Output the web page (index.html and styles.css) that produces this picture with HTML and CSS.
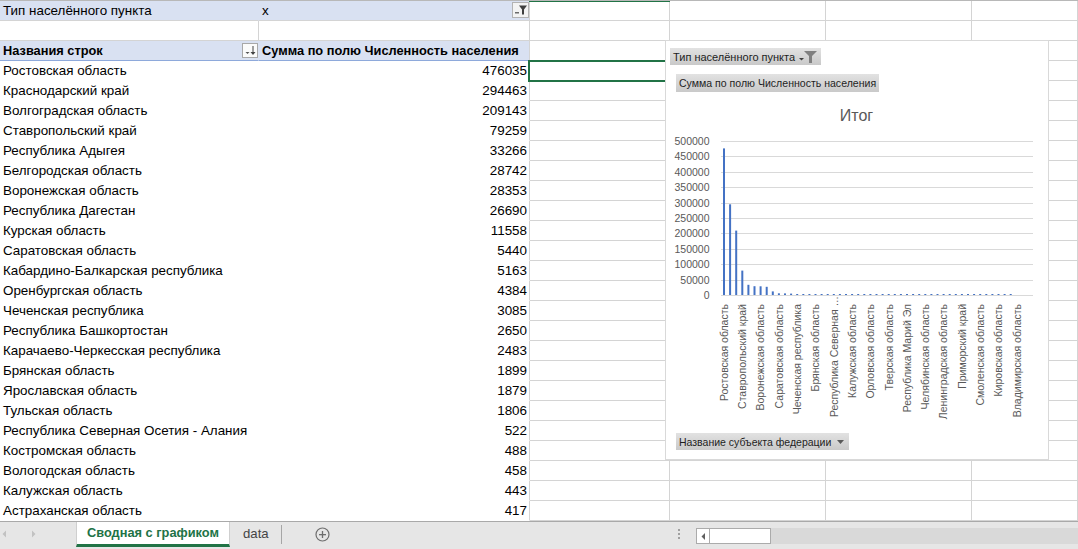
FILE: index.html
```html
<!DOCTYPE html>
<html lang="ru">
<head>
<meta charset="utf-8">
<link rel="stylesheet" href="styles.css">
</head>
<body>
<div class="sheet">
  <div class="row r-filter">
    <div class="c pa blue">Тип населённого пункта</div>
    <div class="c pb blue fx"><span>x</span>
      <svg class="fbtn" width="17" height="16" viewBox="0 0 17 16"><rect x="0.5" y="0.5" width="16" height="15" fill="#f3f3f3" stroke="#b3b3b3"/><polygon points="7,3.5 15,3.5 12,7.5 12,12.5 10,12.5 10,7.5" fill="#3f3f3f"/><rect x="3" y="10" width="4" height="1.5" fill="#6b6b6b"/></svg>
    </div>
    <div class="c"></div><div class="c"></div><div class="c"></div><div class="c"></div>
  </div>
  <div class="row">
    <div class="c"></div><div class="c"></div><div class="c"></div><div class="c"></div><div class="c"></div><div class="c"></div>
  </div>
  <div class="row r-head">
    <div class="c pa blue hb fx"><span>Названия строк</span>
      <svg class="sbtn" width="16" height="15" viewBox="0 0 16 15"><rect x="0.5" y="0.5" width="15" height="14" fill="#fbfbfb" stroke="#a8a8a8"/><polygon points="3.5,9 7.5,9 5.5,11" fill="#555"/><rect x="10.5" y="3" width="1" height="8" fill="#444"/><polygon points="8.5,9 13.5,9 11,12" fill="#444"/></svg>
    </div>
    <div class="c pb blue hb bold">Сумма по полю Численность населения</div>
    <div class="c"></div><div class="c"></div><div class="c"></div><div class="c"></div>
  </div>
  <div class="row"><div class="c pa">Ростовская область</div><div class="c pb num">476035</div><div class="c"></div><div class="c"></div><div class="c"></div><div class="c"></div></div>
  <div class="row"><div class="c pa">Краснодарский край</div><div class="c pb num">294463</div><div class="c"></div><div class="c"></div><div class="c"></div><div class="c"></div></div>
  <div class="row"><div class="c pa">Волгоградская область</div><div class="c pb num">209143</div><div class="c"></div><div class="c"></div><div class="c"></div><div class="c"></div></div>
  <div class="row"><div class="c pa">Ставропольский край</div><div class="c pb num">79259</div><div class="c"></div><div class="c"></div><div class="c"></div><div class="c"></div></div>
  <div class="row"><div class="c pa">Республика Адыгея</div><div class="c pb num">33266</div><div class="c"></div><div class="c"></div><div class="c"></div><div class="c"></div></div>
  <div class="row"><div class="c pa">Белгородская область</div><div class="c pb num">28742</div><div class="c"></div><div class="c"></div><div class="c"></div><div class="c"></div></div>
  <div class="row"><div class="c pa">Воронежская область</div><div class="c pb num">28353</div><div class="c"></div><div class="c"></div><div class="c"></div><div class="c"></div></div>
  <div class="row"><div class="c pa">Республика Дагестан</div><div class="c pb num">26690</div><div class="c"></div><div class="c"></div><div class="c"></div><div class="c"></div></div>
  <div class="row"><div class="c pa">Курская область</div><div class="c pb num">11558</div><div class="c"></div><div class="c"></div><div class="c"></div><div class="c"></div></div>
  <div class="row"><div class="c pa">Саратовская область</div><div class="c pb num">5440</div><div class="c"></div><div class="c"></div><div class="c"></div><div class="c"></div></div>
  <div class="row"><div class="c pa">Кабардино-Балкарская республика</div><div class="c pb num">5163</div><div class="c"></div><div class="c"></div><div class="c"></div><div class="c"></div></div>
  <div class="row"><div class="c pa">Оренбургская область</div><div class="c pb num">4384</div><div class="c"></div><div class="c"></div><div class="c"></div><div class="c"></div></div>
  <div class="row"><div class="c pa">Чеченская республика</div><div class="c pb num">3085</div><div class="c"></div><div class="c"></div><div class="c"></div><div class="c"></div></div>
  <div class="row"><div class="c pa">Республика Башкортостан</div><div class="c pb num">2650</div><div class="c"></div><div class="c"></div><div class="c"></div><div class="c"></div></div>
  <div class="row"><div class="c pa">Карачаево-Черкесская республика</div><div class="c pb num">2483</div><div class="c"></div><div class="c"></div><div class="c"></div><div class="c"></div></div>
  <div class="row"><div class="c pa">Брянская область</div><div class="c pb num">1899</div><div class="c"></div><div class="c"></div><div class="c"></div><div class="c"></div></div>
  <div class="row"><div class="c pa">Ярославская область</div><div class="c pb num">1879</div><div class="c"></div><div class="c"></div><div class="c"></div><div class="c"></div></div>
  <div class="row"><div class="c pa">Тульская область</div><div class="c pb num">1806</div><div class="c"></div><div class="c"></div><div class="c"></div><div class="c"></div></div>
  <div class="row"><div class="c pa">Республика Северная Осетия - Алания</div><div class="c pb num">522</div><div class="c"></div><div class="c"></div><div class="c"></div><div class="c"></div></div>
  <div class="row"><div class="c pa">Костромская область</div><div class="c pb num">488</div><div class="c"></div><div class="c"></div><div class="c"></div><div class="c"></div></div>
  <div class="row"><div class="c pa">Вологодская область</div><div class="c pb num">458</div><div class="c"></div><div class="c"></div><div class="c"></div><div class="c"></div></div>
  <div class="row"><div class="c pa">Калужская область</div><div class="c pb num">443</div><div class="c"></div><div class="c"></div><div class="c"></div><div class="c"></div></div>
  <div class="row"><div class="c pa">Астраханская область</div><div class="c pb num">417</div><div class="c"></div><div class="c"></div><div class="c"></div><div class="c"></div></div>

  <div class="colsel"></div>
  <div class="cellsel"></div>

  <div class="chart">
    <svg class="plot" width="384" height="420" viewBox="0 0 384 420">
      <text x="191.5" y="81" class="title" text-anchor="middle">Итог</text>
      <g stroke="#d9d9d9" stroke-width="1">
        <line x1="56" x2="368" y1="255.5" y2="255.5"/>
        <line x1="56" x2="368" y1="240.5" y2="240.5"/>
        <line x1="56" x2="368" y1="224.5" y2="224.5"/>
        <line x1="56" x2="368" y1="209.5" y2="209.5"/>
        <line x1="56" x2="368" y1="193.5" y2="193.5"/>
        <line x1="56" x2="368" y1="178.5" y2="178.5"/>
        <line x1="56" x2="368" y1="163.5" y2="163.5"/>
        <line x1="56" x2="368" y1="147.5" y2="147.5"/>
        <line x1="56" x2="368" y1="132.5" y2="132.5"/>
        <line x1="56" x2="368" y1="116.5" y2="116.5"/>
        <line x1="56" x2="368" y1="101.5" y2="101.5"/>
      </g>
      <g class="ylab" text-anchor="end">
        <text x="44.5" y="259.2">0</text>
        <text x="44.5" y="244.2">50000</text>
        <text x="44.5" y="228.4">100000</text>
        <text x="44.5" y="213.2">150000</text>
        <text x="44.5" y="197.4">200000</text>
        <text x="44.5" y="182.2">250000</text>
        <text x="44.5" y="167.2">300000</text>
        <text x="44.5" y="151.4">350000</text>
        <text x="44.5" y="136.2">400000</text>
        <text x="44.5" y="120.4">450000</text>
        <text x="44.5" y="105.2">500000</text>
      </g>
      <g fill="#4472c4">
        <rect x="58" y="108.4" width="2" height="146.6"/>
        <rect x="64.1" y="164.3" width="2" height="90.7"/>
        <rect x="70.2" y="190.6" width="2" height="64.4"/>
        <rect x="76.3" y="230.6" width="2" height="24.4"/>
        <rect x="82.4" y="244.8" width="2" height="10.2"/>
        <rect x="88.5" y="246.2" width="2" height="8.8"/>
        <rect x="94.6" y="246.3" width="2" height="8.7"/>
        <rect x="100.7" y="246.8" width="2" height="8.2"/>
        <rect x="106.8" y="251.4" width="2" height="3.6"/>
        <rect x="112.9" y="253.3" width="2" height="1.7"/>
        <rect x="119" y="253.4" width="2" height="1.6"/>
        <rect x="125.1" y="253.6" width="2" height="1.4"/>
        <rect x="131.2" y="254" width="2" height="1"/>
        <rect x="137.3" y="254" width="2" height="1"/>
        <rect x="143.4" y="254" width="2" height="1"/>
        <rect x="149.5" y="254" width="2" height="1"/>
        <rect x="155.6" y="254" width="2" height="1"/>
        <rect x="161.7" y="254" width="2" height="1"/>
        <rect x="167.8" y="254" width="2" height="1"/>
        <rect x="173.9" y="254" width="2" height="1"/>
        <rect x="180" y="254" width="2" height="1"/>
        <rect x="186.1" y="254" width="2" height="1"/>
        <rect x="192.2" y="254" width="2" height="1"/>
        <rect x="198.3" y="254" width="2" height="1"/>
        <rect x="204.4" y="254" width="2" height="1"/>
        <rect x="210.5" y="254" width="2" height="1"/>
        <rect x="216.6" y="254" width="2" height="1"/>
        <rect x="222.7" y="254" width="2" height="1"/>
        <rect x="228.8" y="254" width="2" height="1"/>
        <rect x="234.9" y="254" width="2" height="1"/>
        <rect x="241" y="254" width="2" height="1"/>
        <rect x="247.1" y="254" width="2" height="1"/>
        <rect x="253.2" y="254" width="2" height="1"/>
        <rect x="259.3" y="254" width="2" height="1"/>
        <rect x="265.4" y="254" width="2" height="1"/>
        <rect x="271.5" y="254" width="2" height="1"/>
        <rect x="277.6" y="254" width="2" height="1"/>
        <rect x="283.7" y="254" width="2" height="1"/>
        <rect x="289.8" y="254" width="2" height="1"/>
        <rect x="295.9" y="254" width="2" height="1"/>
        <rect x="302" y="254" width="2" height="1"/>
        <rect x="308.1" y="254" width="2" height="1"/>
        <rect x="314.2" y="254" width="2" height="1"/>
        <rect x="320.3" y="254" width="2" height="1"/>
        <rect x="326.4" y="254" width="2" height="1"/>
        <rect x="332.5" y="254" width="2" height="1"/>
        <rect x="338.6" y="254" width="2" height="1"/>
        <rect x="344.7" y="254" width="2" height="1"/>
      </g>
      <g class="xlab" text-anchor="end">
        <text transform="translate(62.8 264) rotate(-90)">Ростовская область</text>
        <text transform="translate(81.1 264) rotate(-90)">Ставропольский край</text>
        <text transform="translate(99.4 264) rotate(-90)">Воронежская область</text>
        <text transform="translate(117.7 264) rotate(-90)">Саратовская область</text>
        <text transform="translate(136 264) rotate(-90)">Чеченская республика</text>
        <text transform="translate(154.3 264) rotate(-90)">Брянская область</text>
        <text transform="translate(172.6 256) rotate(-90)">Республика Северная …</text>
        <text transform="translate(190.9 264) rotate(-90)">Калужская область</text>
        <text transform="translate(209.2 264) rotate(-90)">Орловская область</text>
        <text transform="translate(227.5 264) rotate(-90)">Тверская область</text>
        <text transform="translate(245.8 264) rotate(-90)">Республика Марий Эл</text>
        <text transform="translate(264.1 264) rotate(-90)">Челябинская область</text>
        <text transform="translate(282.4 264) rotate(-90)">Ленинградская область</text>
        <text transform="translate(300.7 264) rotate(-90)">Приморский край</text>
        <text transform="translate(319 264) rotate(-90)">Смоленская область</text>
        <text transform="translate(337.3 264) rotate(-90)">Кировская область</text>
        <text transform="translate(355.6 264) rotate(-90)">Владимирская область</text>
      </g>
    </svg>
    <div class="pbtn btn-type"><span>Тип населённого пункта</span>
      <svg width="20" height="14" viewBox="0 0 20 14"><polygon points="1,8 6,8 3.5,10.5" fill="#404040"/><polygon points="6,1 19,1 14,6 14,13 11,13 11,6" fill="#808080"/></svg>
    </div>
    <div class="pbtn btn-sum">Сумма по полю Численность населения</div>
    <div class="pbtn btn-name"><span>Название субъекта федерации</span>
      <svg width="12" height="10" viewBox="0 0 12 10"><polygon points="3,3 10,3 6.5,7" fill="#595959"/></svg>
    </div>
  </div>
</div>
<div class="tabbar">
  <div class="nav">
    <svg width="60" height="10" viewBox="0 0 60 10"><polygon points="6,1.5 6,8.5 2.5,5" fill="#c2c2c2"/><polygon points="32,1.5 32,8.5 35.5,5" fill="#c2c2c2"/></svg>
  </div>
  <div class="tab active">Сводная с графиком</div>
  <div class="tab">data</div>
  <div class="sep"></div>
  <div class="plus">
    <svg width="15" height="15" viewBox="0 0 15 15"><circle cx="7.5" cy="7.5" r="6.5" fill="none" stroke="#6e6e6e" stroke-width="1.2"/><rect x="4" y="7" width="7" height="1.3" fill="#6e6e6e"/><rect x="6.85" y="4" width="1.3" height="7" fill="#6e6e6e"/></svg>
  </div>
  <div class="split"><i></i><i></i><i></i></div>
  <div class="hscroll">
    <div class="sbtn-left"><svg width="12" height="13" viewBox="0 0 12 13"><polygon points="8,3 8,10 4.5,6.5" fill="#606060"/></svg></div>
    <div class="thumb"></div>
    <div class="track"></div>
  </div>
</div>
</body>
</html>
```

FILE: styles.css
```css
* { box-sizing: border-box; }
html, body { margin: 0; padding: 0; }
body {
  width: 1078px;
  height: 549px;
  overflow: hidden;
  background: #fff;
  font-family: "Liberation Sans", Arial, sans-serif;
  font-size: 13.4px;
  color: #000;
}
.sheet {
  position: relative;
  height: 521px;
  border-top: 1px solid #b8b8b8;
  overflow: hidden;
}
.row {
  display: grid;
  grid-template-columns: 259px 271px 140px 156px 146px 1fr;
  height: 20px;
}
.c {
  border-right: 1px solid #d4d4d4;
  border-bottom: 1px solid #d4d4d4;
  padding: 1px 3px 0;
  line-height: 18px;
  white-space: nowrap;
  overflow: hidden;
}
.row .pa, .row .pb {
  border-bottom-color: transparent;
}
.row .pa { border-right-color: transparent; }
.blue { background: #d9e1f2; }
.r-filter .pa, .r-filter .pb { border-bottom-color: #d4d4d4; }
.r-filter .pb { border-right-color: #d4d4d4; }
.r-filter .c { padding-top: 0; line-height: 19px; }
.r-head .hb { border-bottom-color: #8ea9db; }
.fx {
  display: flex;
  align-items: center;
  justify-content: space-between;
  padding-right: 0;
}
.fbtn { display: block; margin-top: -1px; }
.sbtn { display: block; margin-top: -1px; }
.bold { font-weight: bold; font-size: 12.8px; }
.hb span { font-weight: bold; font-size: 12.8px; }
.num { text-align: right; padding-right: 2px; }

.colsel {
  position: absolute;
  left: 529px;
  top: -1px;
  width: 141px;
  height: 2px;
  background: #217346;
}
.cellsel {
  position: absolute;
  left: 528px;
  top: 59px;
  width: 142px;
  height: 22px;
  border: 2px solid #217346;
}

.chart {
  position: absolute;
  left: 665px;
  top: 39px;
  width: 384px;
  height: 420px;
  background: #fff;
  border: 1px solid #d9d9d9;
}
.plot {
  position: absolute;
  left: -1px;
  top: -1px;
  font-family: "Liberation Sans", Arial, sans-serif;
}
.plot .title { font-size: 16px; fill: #595959; }
.plot .ylab { font-size: 10.5px; fill: #595959; }
.plot .xlab { font-size: 10.5px; fill: #595959; }

.pbtn {
  position: absolute;
  display: flex;
  align-items: center;
  font-size: 11px;
  color: #1e1e1e;
  background: linear-gradient(#e2e2e2, #c9c9c9);
  padding-left: 3px;
  white-space: nowrap;
}
.btn-type { left: 4px; top: 7px; width: 151px; height: 17px; }
.btn-type svg { margin-left: 3px; }
.btn-sum { left: 10px; top: 33px; width: 203px; height: 18px; font-size: 10.55px; }
.btn-name { left: 10px; top: 392px; width: 173px; height: 17px; font-size: 10.5px; }
.btn-name svg { margin-left: 3px; }

.tabbar {
  height: 28px;
  background: #e6e6e6;
  border-top: 1px solid #a9a9a9;
  display: flex;
  align-items: flex-start;
}
.nav {
  width: 76px;
  height: 24px;
  display: flex;
  align-items: center;
}
.nav svg { display: block; }
.tab {
  height: 24px;
  line-height: 23px;
  font-size: 13.2px;
  color: #444;
  padding: 0 12px 0 13px;
}
.tab.active {
  width: 154px;
  background: #fff;
  color: #217346;
  font-weight: bold;
  font-size: 12.8px;
  text-align: center;
  padding: 0;
  border-bottom: 3px solid #217346;
  border-left: 1px solid #cfcfcf;
  border-right: 1px solid #cfcfcf;
  height: 25px;
  line-height: 22px;
}
.sep {
  width: 1px;
  height: 19px;
  margin-top: 3px;
  background: #a6a6a6;
}
.plus {
  margin-left: 33px;
  margin-top: 5px;
  width: 15px;
  height: 15px;
}
.plus svg { display: block; }
.split {
  margin-left: 348px;
  margin-top: 7px;
  width: 18px;
  display: flex;
  flex-direction: column;
  gap: 2px;
}
.split i {
  display: block;
  width: 2px;
  height: 2px;
  background: #a0a0a0;
}
.hscroll {
  flex: 1;
  display: flex;
  margin-top: 6px;
  height: 16px;
}
.sbtn-left {
  width: 14px;
  height: 16px;
  background: #fff;
  border: 1px solid #ababab;
  display: flex;
  align-items: center;
  justify-content: center;
}
.sbtn-left svg { display: block; }
.thumb {
  width: 61px;
  height: 16px;
  background: #fff;
  border: 1px solid #ababab;
  border-left: none;
}
.track {
  flex: 1;
  height: 16px;
  background: #d9d9d9;
}
```
